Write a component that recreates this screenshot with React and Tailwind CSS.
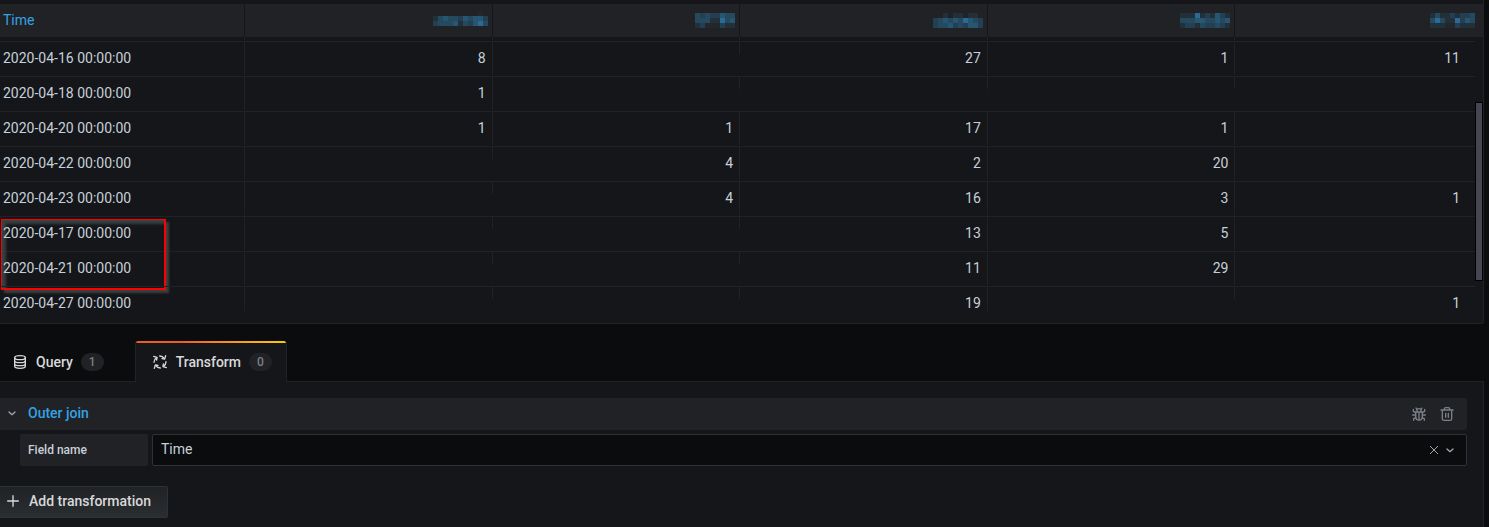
import { useState } from "react";

const BLUES = {
  a: "#213039",
  b: "#233f51",
  c: "#25495f",
  d: "#275673",
  e: "#2b6a95",
  f: "#22272c",
};

// each letter is one censored 5px block
const COLUMNS = [
  { id: "one", blocks: [".........f.", "acdccbdcddb", "bcccdacbdec", "..........."] },
  { id: "two", blocks: ["cbcbbdcc", "cccaaecd", "abfffbaa"] },
  { id: "three", blocks: ["..a.aa.aa.", "bcdcdcedcb", "bccdbcbddb"] },
  { id: "four", blocks: ["aaaeabadba", "cccddccdcd", "abbacbbcba"] },
  { id: "five", blocks: ["acaababbc", "cecaaebdc", "aaaffbaaa"] },
];

const ROWS = [
  { time: "2020-04-16 00:00:00", values: [8, null, 27, 1, 11] },
  { time: "2020-04-18 00:00:00", values: [1, null, null, null, null] },
  { time: "2020-04-20 00:00:00", values: [1, 1, 17, 1, null] },
  { time: "2020-04-22 00:00:00", values: [null, 4, 2, 20, null] },
  { time: "2020-04-23 00:00:00", values: [null, 4, 16, 3, 1] },
  { time: "2020-04-17 00:00:00", values: [null, null, 13, 5, null], marked: true },
  { time: "2020-04-21 00:00:00", values: [null, null, 11, 29, null] },
  { time: "2020-04-27 00:00:00", values: [null, null, 19, null, 1] },
];

const Icon = ({ className = "w-4 h-4", children }) => (
  <svg
    viewBox="0 0 24 24"
    fill="none"
    stroke="currentColor"
    strokeWidth="2"
    strokeLinecap="round"
    strokeLinejoin="round"
    aria-hidden="true"
    className={`shrink-0 ${className}`}
  >
    {children}
  </svg>
);

const DatabaseIcon = () => (
  <Icon>
    <ellipse cx="12" cy="5.500" rx="8" ry="3" />
    <path d="M4 5.500v13c0 1.700 3.600 3 8 3s8-1.300 8-3v-13M4 10c0 1.700 3.600 3 8 3s8-1.300 8-3M4 14.500c0 1.700 3.600 3 8 3s8-1.300 8-3" />
  </Icon>
);

const ProcessIcon = () => (
  <Icon>
    {[0, 90, 180, 270].map((angle) => (
      <g key={angle} transform={`rotate(${angle} 12 12)`}>
        <path d="M3 12.500c0-3 1.300-5.300 4-7" />
        <path d="M2.500 3.500l5 1.500-.5 4" />
      </g>
    ))}
  </Icon>
);

const BugIcon = () => (
  <Icon>
    <path d="M7 9h10v7a5 5 0 0 1-10 0zM9 9V7a3 3 0 0 1 6 0v2M12 9.500V21" />
    <path d="M2.500 13.500H7M17 13.500h4.500M7 10L3.500 8V5M17 10l3.500-2V5M7.500 17.500L4 19v2.500M16.500 17.500L20 19v2.500M9 5.500L7.500 3M15 5.500L16.500 3" />
  </Icon>
);

const TrashIcon = () => (
  <Icon>
    <path d="M3 6h18M5 6v13a2.500 2.500 0 0 0 2.500 2.500h9A2.500 2.500 0 0 0 19 19V6M8 6V4.500A2 2 0 0 1 10 2.500h4a2 2 0 0 1 2 2V6M10 11v6M14 11v6" />
  </Icon>
);

const ChevronIcon = () => (
  <Icon>
    <path d="M7.500 10.500l4.500 4 4.500-4" />
  </Icon>
);

const CensoredName = ({ blocks }) => (
  <svg
    width={blocks[0].length * 5}
    height={blocks.length * 5}
    shapeRendering="crispEdges"
    aria-hidden="true"
    className="ml-auto"
  >
    {blocks.map((line, y) =>
      line.split("").map((key, x) =>
        key === "." ? null : (
          <rect key={`${x}-${y}`} x={x * 5} y={y * 5} width="5" height="5" fill={BLUES[key]} />
        )
      )
    )}
  </svg>
);

// empty cells only carry the short divider of their padding
const ValueCell = ({ value, last, bottom }) => (
  <td className={`p-0 h-[35px] align-top ${bottom ? "" : "border-b border-[#202226]"}`}>
    <div
      className={`text-right ${
        last ? "pr-[23px]" : "pr-[6px] border-r border-[#202226]"
      } ${value === null ? "h-3" : bottom ? "h-6 leading-[33px]" : "h-[33px] leading-[33px]"}`}
    >
      {value}
    </div>
  </td>
);

const ResultTable = () => (
  <section className="relative mr-[5px] h-[324px] pt-1 bg-[#141619] border-r border-b border-[#202226] rounded-br-[3px]">
    <table className="w-full table-fixed border-separate border-spacing-0">
      <thead>
        <tr>
          <th className="w-[245px] h-[33px] p-0 pl-[3px] pb-0.5 text-left font-normal bg-[#202226] text-[#33a2e5] border-r border-[#141619]">
            Time
          </th>
          {COLUMNS.map((column, i) => (
            <th
              key={column.id}
              className={`h-[33px] p-0 bg-[#202226] ${
                i === COLUMNS.length - 1 ? "pr-2" : "pr-1 border-r border-[#141619]"
              }`}
            >
              <CensoredName blocks={column.blocks} />
            </th>
          ))}
        </tr>
      </thead>
      <tbody>
        {/* bottom edge of the row scrolled under the header */}
        <tr aria-hidden="true">
          {[0, 1, 2, 3, 4, 5].map((i) => (
            <td key={i} className="p-0 h-[5px] align-top border-b border-[#202226]">
              <div className={`h-[3px] ${i < 5 ? "border-r border-[#202226]" : ""}`} />
            </td>
          ))}
        </tr>
        {ROWS.map((row, r) => {
          const bottom = r === ROWS.length - 1;
          return (
            <tr key={row.time}>
              <td className={`relative p-0 h-[35px] align-top ${bottom ? "" : "border-b border-[#202226]"}`}>
                {row.marked && (
                  <div className="absolute left-px top-0.5 w-[165px] h-[71px] border border-r-2 border-b-2 border-[#ff0000] shadow-[3px_3px_2px_#3c3f40,inset_4px_4px_3px_#3c3f40] pointer-events-none" />
                )}
                <div
                  className={`relative z-10 pl-[3px] leading-[33px] border-r border-[#202226] ${bottom ? "h-6" : "h-[33px]"}`}
                >
                  {row.time}
                </div>
              </td>
              {row.values.map((value, i) => (
                <ValueCell key={COLUMNS[i].id} value={value} last={i === 4} bottom={bottom} />
              ))}
            </tr>
          );
        })}
      </tbody>
    </table>
    {/* scrollbar */}
    <div className="absolute right-0 top-[37px] bottom-3 w-2 pt-[65px] bg-[#141619]">
      <div className="h-[179px] bg-[#464653] border border-black" />
    </div>
  </section>
);

const Tab = ({ active, icon, label, count, onClick }) => (
  <button
    type="button"
    role="tab"
    aria-selected={active}
    onClick={onClick}
    className={`relative flex items-center h-[41px] pl-4 pr-[14px] text-[#d8d9da] font-medium ${
      active
        ? "bg-[#141619] border-x border-[#202226] rounded-t-[3px] overflow-hidden"
        : "h-10"
    }`}
  >
    {active && (
      <span className="absolute inset-x-0 top-0 h-0.5 bg-linear-to-r from-[#f05a28] from-30% to-[#fbca0a]" />
    )}
    {icon}
    <span className="ml-2">{label}</span>
    <span className="ml-2 px-2 h-[18px] rounded-full bg-[#202226] text-[#7b8087] text-xs leading-[18px]">
      {count}
    </span>
  </button>
);

export default function App() {
  const [tab, setTab] = useState("transform");
  const [field, setField] = useState("Time");

  return (
    <div className="min-h-screen flex flex-col overflow-hidden bg-[#0b0c0e] text-[#c7d0d9] text-sm font-['Roboto',sans-serif]">
      <ResultTable />

      <div role="tablist" className="relative z-10 flex mt-[17px] -mb-px gap-4">
        <div className="-ml-1 pr-px">
          <Tab
            active={tab === "query"}
            icon={<DatabaseIcon />}
            label="Query"
            count={1}
            onClick={() => setTab("query")}
          />
        </div>
        <Tab
          active={tab === "transform"}
          icon={<ProcessIcon />}
          label="Transform"
          count={0}
          onClick={() => setTab("transform")}
        />
      </div>

      <main className="flex-1 mr-[5px] pt-4 pr-4 bg-[#141619] border-t border-r border-[#202226]">
        <div className="flex items-center h-8 pl-1 pr-3 rounded-r-[3px] bg-[#202226] text-[#7b8087]">
          <button type="button" className="flex items-center gap-2 pb-0.5 text-[#33a2e5] font-medium">
            <span className="text-[#9fa7b3]">
              <ChevronIcon />
            </span>
            Outer join
          </button>
          <button type="button" aria-label="Debug" className="ml-auto">
            <BugIcon />
          </button>
          <button type="button" aria-label="Remove" className="ml-3">
            <TrashIcon />
          </button>
        </div>

        <div className="flex mt-1 ml-5 gap-1">
          <label
            htmlFor="field-name"
            className="w-32 h-8 px-2 leading-8 rounded-[2px] bg-[#202226] text-xs font-medium"
          >
            Field name
          </label>
          <div className="flex flex-1 items-center h-8 pr-2 rounded-[2px] bg-[#0b0c0e] border border-[#2c3235] text-[#9fa7b3]">
            <select
              id="field-name"
              value={field}
              onChange={(e) => setField(e.target.value)}
              className="flex-1 h-full pl-2 pb-0.5 appearance-none bg-transparent text-[#c7d0d9] outline-none"
            >
              <option value="">Choose</option>
              <option value="Time">Time</option>
            </select>
            <button type="button" aria-label="Clear" onClick={() => setField("")}>
              <Icon>
                <path strokeWidth="1.500" d="M6.500 6.500l11 11M17.500 6.500l-11 11" />
              </Icon>
            </button>
            <ChevronIcon />
          </div>
        </div>

        <button
          type="button"
          className="flex items-center gap-2 h-8 mt-5 pl-[5px] pr-4 pb-0.5 rounded-r-[2px] border border-l-0 border-[#2c3235] bg-linear-to-b from-[#202226] to-[#2a2e31] font-medium text-[#d8d9da]"
        >
          <Icon>
            <path d="M12 4v16M4 12h16" />
          </Icon>
          Add transformation
        </button>
      </main>
    </div>
  );
}
